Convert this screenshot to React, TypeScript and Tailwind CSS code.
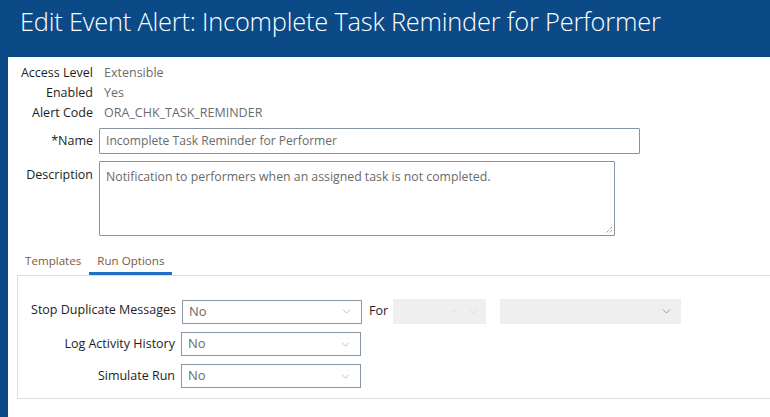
import { ChevronDown, ChevronUp } from "lucide-react";

const FONT = { fontFamily: '"Open Sans", "Noto Sans", sans-serif' };

const INFO = [
  { label: "Access Level", value: "Extensible" },
  { label: "Enabled", value: "Yes" },
  { label: "Alert Code", value: "ORA_CHK_TASK_REMINDER" },
];

function Select({ value }: { value: string }) {
  return (
    <div className="flex items-center justify-between w-[180px] h-[24px] border border-[#8a97a3] bg-white pl-[6px] pr-[8px]">
      <span className="text-[13px] text-[#6a6a6a]">{value}</span>
      <ChevronDown size={13} strokeWidth={1.2} className="text-[#9aa1a8]" />
    </div>
  );
}

export default function App() {
  return (
    <div className="w-[770px] h-[417px] bg-[#0c4a87] overflow-hidden" style={FONT}>
      {/* Header */}
      <div className="h-[57px] pl-[20px] pt-[4px]">
        <h1 className="text-[25.4px] font-light text-white tracking-[-0.2px] leading-[34px]">
          Edit Event Alert: Incomplete Task Reminder for Performer
        </h1>
      </div>

      {/* Body */}
      <div className="ml-[8px] h-[360px] bg-white pt-[6px] overflow-hidden">
        <div className="text-[12.5px]">
          {INFO.map((row) => (
            <div key={row.label} className="flex h-[20px] items-center">
              <span className="w-[85px] text-right text-[#1e1e1e]">{row.label}</span>
              <span className="ml-[11px] text-[#6b6b6b]">{row.value}</span>
            </div>
          ))}

          <div className="flex items-center mt-[5px]">
            <span className="w-[85px] text-right text-[#1e1e1e]">*Name</span>
            <div className="ml-[6px] w-[541px] h-[26px] border border-[#8594a0] rounded-[1px] px-[6px] flex items-center text-[12.1px] text-[#6a6a6a]">
              Incomplete Task Reminder for Performer
            </div>
          </div>

          <div className="flex mt-[7px]">
            <span className="w-[85px] text-right text-[#1e1e1e] pt-[5px]">Description</span>
            <div className="relative ml-[6px] w-[516px] h-[75px] border border-[#8594a0] rounded-[1px] px-[6px] pt-[6px] text-[12.3px] text-[#6a6a6a]">
              Notification to performers when an assigned task is not completed.
              <svg className="absolute right-[1px] bottom-[1px]" width="9" height="9" viewBox="0 0 9 9">
                <path d="M8 2 L2 8 M8 5 L5 8" stroke="#6f6f6f" strokeWidth="1" strokeDasharray="1 1" />
              </svg>
            </div>
          </div>
        </div>

        {/* Tabs */}
        <div className="ml-[9px] mt-[14px] flex h-[25px] text-[11.6px] text-[#7b5c3e]">
          <div className="px-[8px] pb-[3px] flex items-center">Templates</div>
          <div className="px-[8px] flex items-center border-b-[3px] border-[#1f6fc5]">
            Run Options
          </div>
        </div>

        <div className="ml-[9px] w-[800px] border border-[#d9dee5] pt-[23px] pb-[10px] text-[12.5px]">
          <div className="flex items-center h-[25px]">
            <span className="w-[158px] text-right text-[#1e1e1e] -mt-[2px]">Stop Duplicate Messages</span>
            <div className="ml-[6px]">
              <Select value="No" />
            </div>
            <span className="ml-[7px] text-[#1e1e1e]">For</span>
            <div className="ml-[5px] w-[93px] h-[25px] bg-[#efeff0] flex items-center justify-end gap-[7px] pr-[6px]">
              <ChevronUp size={13} strokeWidth={1} className="text-[#cfd2d6]" />
              <ChevronDown size={13} strokeWidth={1} className="text-[#cfd2d6]" />
            </div>
            <div className="ml-[14px] w-[181px] h-[25px] bg-[#efeff0] flex items-center justify-end pr-[8px]">
              <ChevronDown size={13} strokeWidth={1.5} className="text-[#8a8a8a]" />
            </div>
          </div>

          <div className="flex items-center h-[24px] mt-[8px]">
            <span className="w-[157px] text-right text-[#1e1e1e]">Log Activity History</span>
            <div className="ml-[6px]">
              <Select value="No" />
            </div>
          </div>

          <div className="flex items-center h-[24px] mt-[8px]">
            <span className="w-[157px] text-right text-[#1e1e1e]">Simulate Run</span>
            <div className="ml-[6px]">
              <Select value="No" />
            </div>
          </div>
        </div>
      </div>
    </div>
  );
}
